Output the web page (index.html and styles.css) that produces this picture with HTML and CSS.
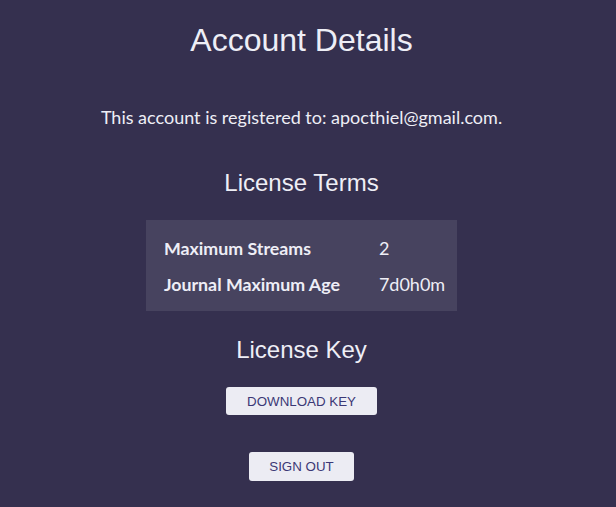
FILE: index.html
```html
<!DOCTYPE html>
<html lang="en">
<head>
    <meta charset="UTF-8">
    <title>Account Details</title>
    <link rel="stylesheet" href="styles.css">
</head>
<body>

    <main class="account">
        <h1>Account Details</h1>

        <p class="owner">This account is registered to: apocthiel@gmail.com.</p>

        <h2>License Terms</h2>
        <div class="terms">
            <div class="term-name">Maximum Streams</div>
            <div class="term-value">2</div>
            <div class="term-name">Journal Maximum Age</div>
            <div class="term-value">7d0h0m</div>
        </div>

        <h2 class="key-title">License Key</h2>
        <button class="btn">Download Key</button>

        <button class="btn sign-out">Sign Out</button>
    </main>

</body>
</html>
```

FILE: styles.css
```css
body {
    margin: 0;
    padding: 0;
    background: #35304f;
    color: #eeeef6;
    font-family: 'Lato', sans-serif;
}

.account {
    width: 603px;
    display: flex;
    flex-direction: column;
    align-items: center;
    padding-top: 22px;
    padding-bottom: 26px;
}

h1 {
    font-family: 'Liberation Sans', Arial, sans-serif;
    font-size: 32px;
    font-weight: normal;
    line-height: 37px;
    margin: 0;
}

h2 {
    font-family: 'Liberation Sans', Arial, sans-serif;
    font-size: 24px;
    font-weight: normal;
    line-height: 28px;
    margin: 0;
}

.owner {
    font-size: 18px;
    line-height: 20px;
    margin: 48px 0 42px;
}

.terms {
    margin-top: 23px;
    background: #47435f;
    padding: 10px 12px 9px 18px;
    display: grid;
    grid-template-columns: 215px auto;
    grid-auto-rows: 36px;
    align-items: center;
    font-size: 18px;
}

.term-name {
    font-weight: bold;
    font-size: 17.8px;
}

.key-title {
    margin-top: 25px;
}

.btn {
    margin-top: 23px;
    height: 28px;
    padding: 0 21px;
    border: none;
    border-radius: 3px;
    background: #ececf3;
    color: #3b3876;
    font-family: 'Liberation Sans', Arial, sans-serif;
    font-size: 13.33px;
    text-transform: uppercase;
    cursor: pointer;
}

.sign-out {
    margin-top: 37px;
    height: 29px;
    padding: 0 20px;
}
```
